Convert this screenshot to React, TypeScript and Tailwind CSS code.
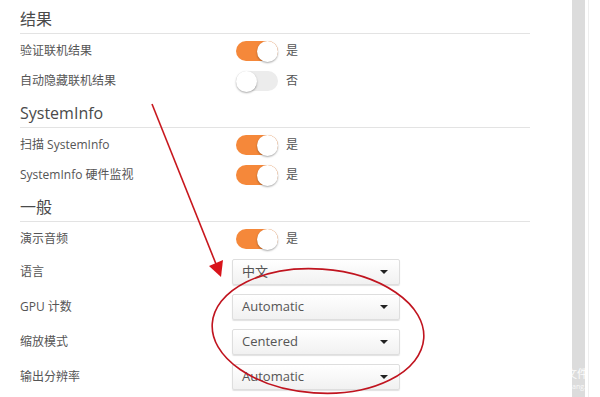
import React from 'react';

const font = { fontFamily: '"Open Sans", "Noto Sans CJK SC", sans-serif' };

const Heading: React.FC<{ title: string }> = ({ title }) => (
  <div className="h-[32px] pt-[3px] flex items-center border-b border-[#e3e3e3] text-[16px] text-[#4a4a4a]">
    {title}
  </div>
);

const Toggle: React.FC<{ on: boolean }> = ({ on }) => (
  <div className="flex items-center ml-[4px]">
    <div
      className={`w-[42px] h-[20px] rounded-full flex items-center ${
        on ? 'bg-[#f5883a] justify-end' : 'bg-[#ececec] justify-start'
      }`}
    >
      <div className="w-[21px] h-[21px] rounded-full bg-white shadow-[0_1px_2px_rgba(0,0,0,0.35)]" />
    </div>
    <span className="ml-[8px] text-[12px] text-[#555]">{on ? '是' : '否'}</span>
  </div>
);

const Select: React.FC<{ value: string }> = ({ value }) => (
  <div className="w-[168px] h-[26px] flex items-center justify-between px-[9px] border border-[#dedede] rounded-[2px] bg-gradient-to-b from-white to-[#f1f1f1] shadow-[0_1px_1px_rgba(0,0,0,0.12)] text-[13px] text-[#555]">
    <span>{value}</span>
    <span className="w-0 h-0 border-l-[4px] border-r-[4px] border-t-[4px] border-l-transparent border-r-transparent border-t-[#222] mr-[2px]" />
  </div>
);

const ToggleRow: React.FC<{ label: string; on: boolean }> = ({ label, on }) => (
  <div className="h-[30px] flex items-center">
    <div className="w-[212px] text-[12px] text-[#555]">{label}</div>
    <Toggle on={on} />
  </div>
);

const SelectRow: React.FC<{ label: string; value: string }> = ({ label, value }) => (
  <div className="h-[35px] flex items-center">
    <div className="w-[212px] text-[12px] text-[#555]">{label}</div>
    <Select value={value} />
  </div>
);

export default function App() {
  return (
    <div className="relative w-[600px] h-[397px] overflow-hidden bg-white flex" style={font}>
      <div className="w-[530px] pl-[20px] pt-[2px]">
        <Heading title="结果" />
        <div className="mt-[2px]">
          <ToggleRow label="验证联机结果" on />
          <ToggleRow label="自动隐藏联机结果" on={false} />
        </div>
        <Heading title="SystemInfo" />
        <div className="mt-[2px]">
          <ToggleRow label="扫描 SystemInfo" on />
          <ToggleRow label="SystemInfo 硬件监视" on />
        </div>
        <Heading title="一般" />
        <div className="mt-[2px]">
          <ToggleRow label="演示音频" on />
          <SelectRow label="语言" value="中文" />
          <SelectRow label="GPU 计数" value="Automatic" />
          <SelectRow label="缩放模式" value="Centered" />
          <SelectRow label="输出分辨率" value="Automatic" />
        </div>
      </div>

      {/* scrollbar */}
      <div className="ml-[42px] w-[13px] h-full bg-[#dcdcdc]" />
      <div className="ml-[3px] w-px h-full bg-[#eeeeee]" />

      {/* watermark */}
      <div className="absolute left-[566px] top-[368px] text-[11px] leading-none text-white/90">文件</div>
      <div className="absolute left-[572px] top-[383px] text-[7px] leading-none text-white/80">ang.</div>

      {/* red annotation */}
      <svg className="absolute inset-0 pointer-events-none" width="600" height="397">
        <line x1="152" y1="104" x2="216" y2="264" stroke="#c8171d" strokeWidth="1.6" />
        <polygon points="221,277 209,266 223,260" fill="#d8141b" />
        <ellipse
          cx="318"
          cy="331"
          rx="106"
          ry="62"
          transform="rotate(4 318 331)"
          fill="none"
          stroke="#c0141f"
          strokeWidth="1.6"
        />
      </svg>
    </div>
  );
}
